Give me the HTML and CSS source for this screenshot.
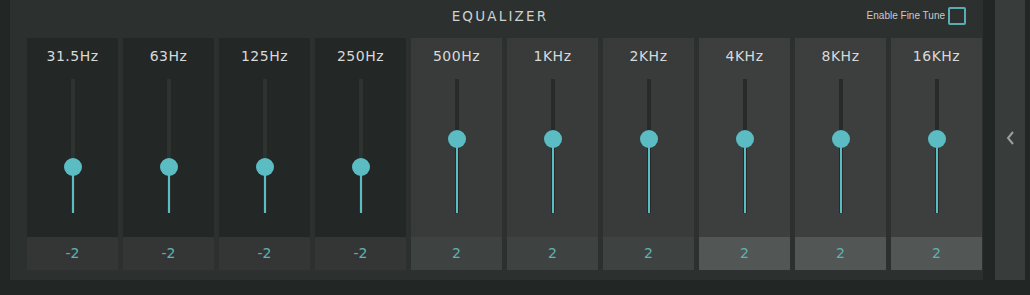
FILE: index.html
```html
<!DOCTYPE html>
<html lang="en">
<head>
    <meta charset="UTF-8">
    <meta name="viewport" content="width=device-width, initial-scale=1.0">
    <title>Equalizer</title>
    <link rel="stylesheet" href="styles.css">
</head>
<body>
    <div class="app">
        <div class="eq-panel">
            <div class="eq-header">
                <span></span>
                <h1 class="eq-title">EQUALIZER</h1>
                <label class="fine-tune">
                    <span>Enable Fine Tune</span>
                    <span class="checkbox"></span>
                </label>
            </div>
            <div class="bands">
                <div class="band band-low">
                    <div class="band-label">31.5Hz</div>
                    <div class="slider"><div class="track"><div class="fill" style="top: 88px"></div><div class="knob" style="top: 88px"></div></div></div>
                    <div class="band-value">-2</div>
                </div>
                <div class="band band-low">
                    <div class="band-label">63Hz</div>
                    <div class="slider"><div class="track"><div class="fill" style="top: 88px"></div><div class="knob" style="top: 88px"></div></div></div>
                    <div class="band-value">-2</div>
                </div>
                <div class="band band-low">
                    <div class="band-label">125Hz</div>
                    <div class="slider"><div class="track"><div class="fill" style="top: 88px"></div><div class="knob" style="top: 88px"></div></div></div>
                    <div class="band-value">-2</div>
                </div>
                <div class="band band-low">
                    <div class="band-label">250Hz</div>
                    <div class="slider"><div class="track"><div class="fill" style="top: 88px"></div><div class="knob" style="top: 88px"></div></div></div>
                    <div class="band-value">-2</div>
                </div>
                <div class="band band-mid">
                    <div class="band-label">500Hz</div>
                    <div class="slider"><div class="track"><div class="fill" style="top: 60px"></div><div class="knob" style="top: 60px"></div></div></div>
                    <div class="band-value">2</div>
                </div>
                <div class="band band-mid">
                    <div class="band-label">1KHz</div>
                    <div class="slider"><div class="track"><div class="fill" style="top: 60px"></div><div class="knob" style="top: 60px"></div></div></div>
                    <div class="band-value">2</div>
                </div>
                <div class="band band-mid">
                    <div class="band-label">2KHz</div>
                    <div class="slider"><div class="track"><div class="fill" style="top: 60px"></div><div class="knob" style="top: 60px"></div></div></div>
                    <div class="band-value">2</div>
                </div>
                <div class="band band-high">
                    <div class="band-label">4KHz</div>
                    <div class="slider"><div class="track"><div class="fill" style="top: 60px"></div><div class="knob" style="top: 60px"></div></div></div>
                    <div class="band-value">2</div>
                </div>
                <div class="band band-high">
                    <div class="band-label">8KHz</div>
                    <div class="slider"><div class="track"><div class="fill" style="top: 60px"></div><div class="knob" style="top: 60px"></div></div></div>
                    <div class="band-value">2</div>
                </div>
                <div class="band band-high">
                    <div class="band-label">16KHz</div>
                    <div class="slider"><div class="track"><div class="fill" style="top: 60px"></div><div class="knob" style="top: 60px"></div></div></div>
                    <div class="band-value">2</div>
                </div>
            </div>
        </div>
        <div class="side-panel">
            <svg class="chevron" width="10" height="16" viewBox="0 0 10 16">
                <path d="M8 2 L3 8 L8 14" fill="none" stroke="#9b9f9e" stroke-width="2"/>
            </svg>
        </div>
    </div>
</body>
</html>
```

FILE: styles.css
```css
body {
    margin: 0;
    padding: 0;
    background-color: #222725;
    font-family: "DejaVu Sans", sans-serif;
}
.app {
    display: flex;
    gap: 12px;
    height: 280px;
    padding-left: 10px;
}
.eq-panel {
    width: 973px;
    background-color: #2c302f;
    box-sizing: border-box;
    padding: 0 0 9px 17px;
}
.eq-header {
    display: grid;
    grid-template-columns: 1fr auto 1fr;
    align-items: center;
    height: 38px;
    padding-right: 17px;
    margin-left: -17px;
}
.eq-title {
    margin: 0;
    font-size: 13.5px;
    font-weight: normal;
    letter-spacing: 2.2px;
    color: #d0d2d1;
    padding-left: 24px;
    padding-bottom: 6px;
}
.fine-tune {
    justify-self: end;
    display: flex;
    align-items: center;
    gap: 3px;
    font-family: "Liberation Sans", sans-serif;
    font-size: 10px;
    color: #c9cbca;
    padding-bottom: 7px;
}
.checkbox {
    width: 14px;
    height: 14px;
    border: 2px solid #5aaeb3;
    border-radius: 2px;
}
.bands {
    display: grid;
    grid-template-columns: repeat(10, 91px);
    column-gap: 5px;
}
.band {
    display: flex;
    flex-direction: column;
    height: 232px;
}
.band-low { background-color: #232726; }
.band-mid { background-color: #383b3a; }
.band-high { background-color: #3c3f3e; }
.band-label {
    height: 36px;
    line-height: 36px;
    text-align: center;
    font-size: 14px;
    letter-spacing: 0.5px;
    color: #d8d9d9;
}
.slider {
    flex: 1;
    display: flex;
    justify-content: center;
    padding-top: 5px;
}
.track {
    position: relative;
    width: 4px;
    height: 134px;
    background-color: #2e3231;
}
.band-mid .track,
.band-high .track {
    background-color: #262a29;
}
.fill {
    position: absolute;
    left: 1px;
    bottom: 0;
    width: 2px;
    background-color: #5cbcc4;
}
.knob {
    position: absolute;
    left: -7px;
    width: 18px;
    height: 18px;
    margin-top: -9px;
    border-radius: 50%;
    background-color: #5cbcc4;
}
.band-value {
    height: 33px;
    line-height: 33px;
    text-align: center;
    font-size: 14px;
    color: #5fb3b6;
}
.band-low .band-value { background-color: #333635; }
.band-mid .band-value { background-color: #3e4241; }
.band-high .band-value { background-color: #525755; }
.side-panel {
    width: 30px;
    background-color: #383c3b;
    display: flex;
    align-items: center;
    justify-content: center;
    padding-bottom: 4px;
    box-sizing: border-box;
}
```
